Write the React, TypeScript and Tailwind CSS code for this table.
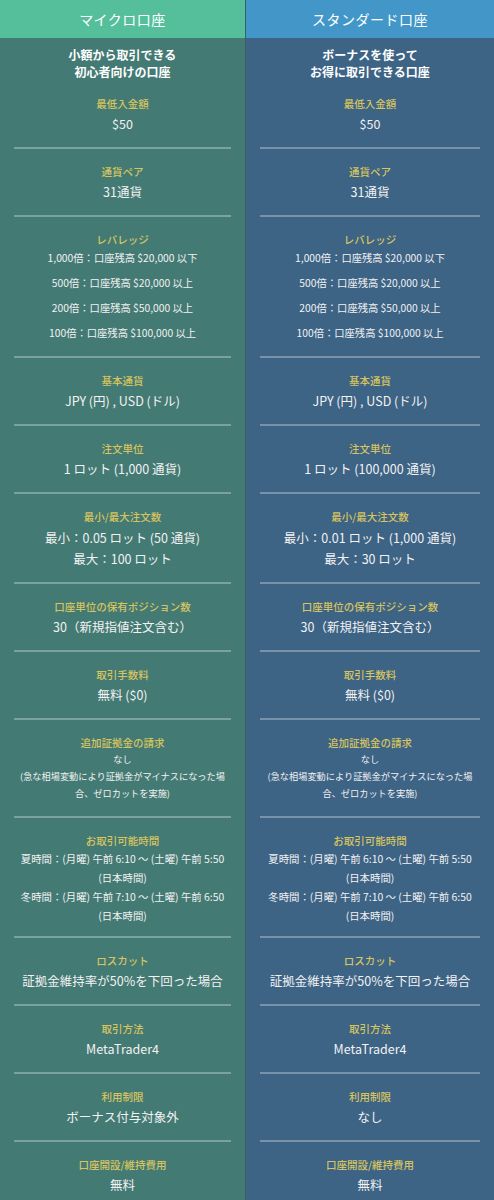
type Row = { label: string; lines: string[]; text?: string; lead?: string; pb?: string };

const micro: Row[] = [
  { label: '最低入金額', lines: ['$50'] },
  { label: '通貨ペア', lines: ['31通貨'] },
  {
    label: 'レバレッジ',
    text: 'text-[10.3px]',
    lead: 'gap-[5px] leading-[20px]',
    lines: ['1,000倍：口座残高 $20,000 以下', '500倍：口座残高 $20,000 以上', '200倍：口座残高 $50,000 以上', '100倍：口座残高 $100,000 以上'],
  },
  { label: '基本通貨', lines: ['JPY (円) , USD (ドル)'] },
  { label: '注文単位', lines: ['1 ロット (1,000 通貨)'] },
  { label: '最小/最大注文数', lines: ['最小：0.05 ロット (50 通貨)', '最大：100 ロット'], lead: 'leading-[21px]' },
  { label: '口座単位の保有ポジション数', lines: ['30（新規指値注文含む）'] },
  { label: '取引手数料', lines: ['無料 ($0)'] },
  {
    label: '追加証拠金の請求',
    text: 'text-[9.2px]',
    lead: 'leading-[17px]',
    pb: 'pb-[14px]',
    lines: ['なし', '(急な相場変動により証拠金がマイナスになった場合、ゼロカットを実施)'],
  },
  {
    label: 'お取引可能時間',
    text: 'text-[10.4px]',
    lead: 'leading-[19px]',
    pb: 'pb-[11px]',
    // (日本時間) always sits on its own line
    lines: ['夏時間：(月曜) 午前 6:10 〜 (土曜) 午前 5:50', '(日本時間)', '冬時間：(月曜) 午前 7:10 〜 (土曜) 午前 6:50', '(日本時間)'],
  },
  { label: 'ロスカット', lines: ['証拠金維持率が50%を下回った場合'] },
  { label: '取引方法', lines: ['MetaTrader4'] },
  { label: '利用制限', lines: ['ボーナス付与対象外'] },
  { label: '口座開設/維持費用', lines: ['無料'] },
];

const standard: Row[] = micro.map((r) => {
  if (r.label === '注文単位') return { ...r, lines: ['1 ロット (100,000 通貨)'] };
  if (r.label === '最小/最大注文数') return { ...r, lines: ['最小：0.01 ロット (1,000 通貨)', '最大：30 ロット'] };
  if (r.label === '利用制限') return { ...r, lines: ['なし'] };
  return r;
});

function Column({
  title,
  intro,
  rows,
  head,
  body,
}: {
  title: string;
  intro: string[];
  rows: Row[];
  head: string;
  body: string;
}) {
  return (
    <div className={`flex flex-col ${body}`}>
      <div className={`h-[38px] flex items-center justify-center text-[14px] text-white tracking-[0.5px] ${head}`}>
        {title}
      </div>
      <div className="pt-[8px] pb-[1px] text-center text-[12px] font-bold leading-[17px] text-white">
        {intro.map((t) => (
          <div key={t}>{t}</div>
        ))}
      </div>
      <div className="px-[14px]">
        {rows.map((r, i) => (
          <div key={r.label} className={i > 0 ? 'border-t-2 border-white/30' : ''}>
            <div className={`pt-[15px] text-center ${r.pb ?? 'pb-[13px]'}`}>
              <div className="text-[10.5px] leading-[16px] font-medium text-[#d6c460]">{r.label}</div>
              <div
                className={`flex flex-col text-[#f2f2f2] ${r.text ?? 'mt-[2px] text-[12.5px]'} ${
                  r.lead ?? 'leading-[20px]'
                }`}
              >
                {r.lines.map((l, j) => (
                  <div key={j}>{l}</div>
                ))}
              </div>
            </div>
          </div>
        ))}
      </div>
    </div>
  );
}

export default function App() {
  return (
    <div
      className="w-[494px] grid grid-cols-[245px_249px]"
      style={{ fontFamily: '"Noto Sans CJK JP", "Noto Sans", sans-serif' }}
    >
      <Column
        title="マイクロ口座"
        intro={['小額から取引できる', '初心者向けの口座']}
        rows={micro}
        head="bg-[#55bf9c]"
        body="bg-[#447a74]"
      />
      <Column
        title="スタンダード口座"
        intro={['ボーナスを使って', 'お得に取引できる口座']}
        rows={standard}
        head="bg-[#4297c8]"
        body="bg-[#3d6385] border-l border-[#3a5f66]"
      />
    </div>
  );
}
